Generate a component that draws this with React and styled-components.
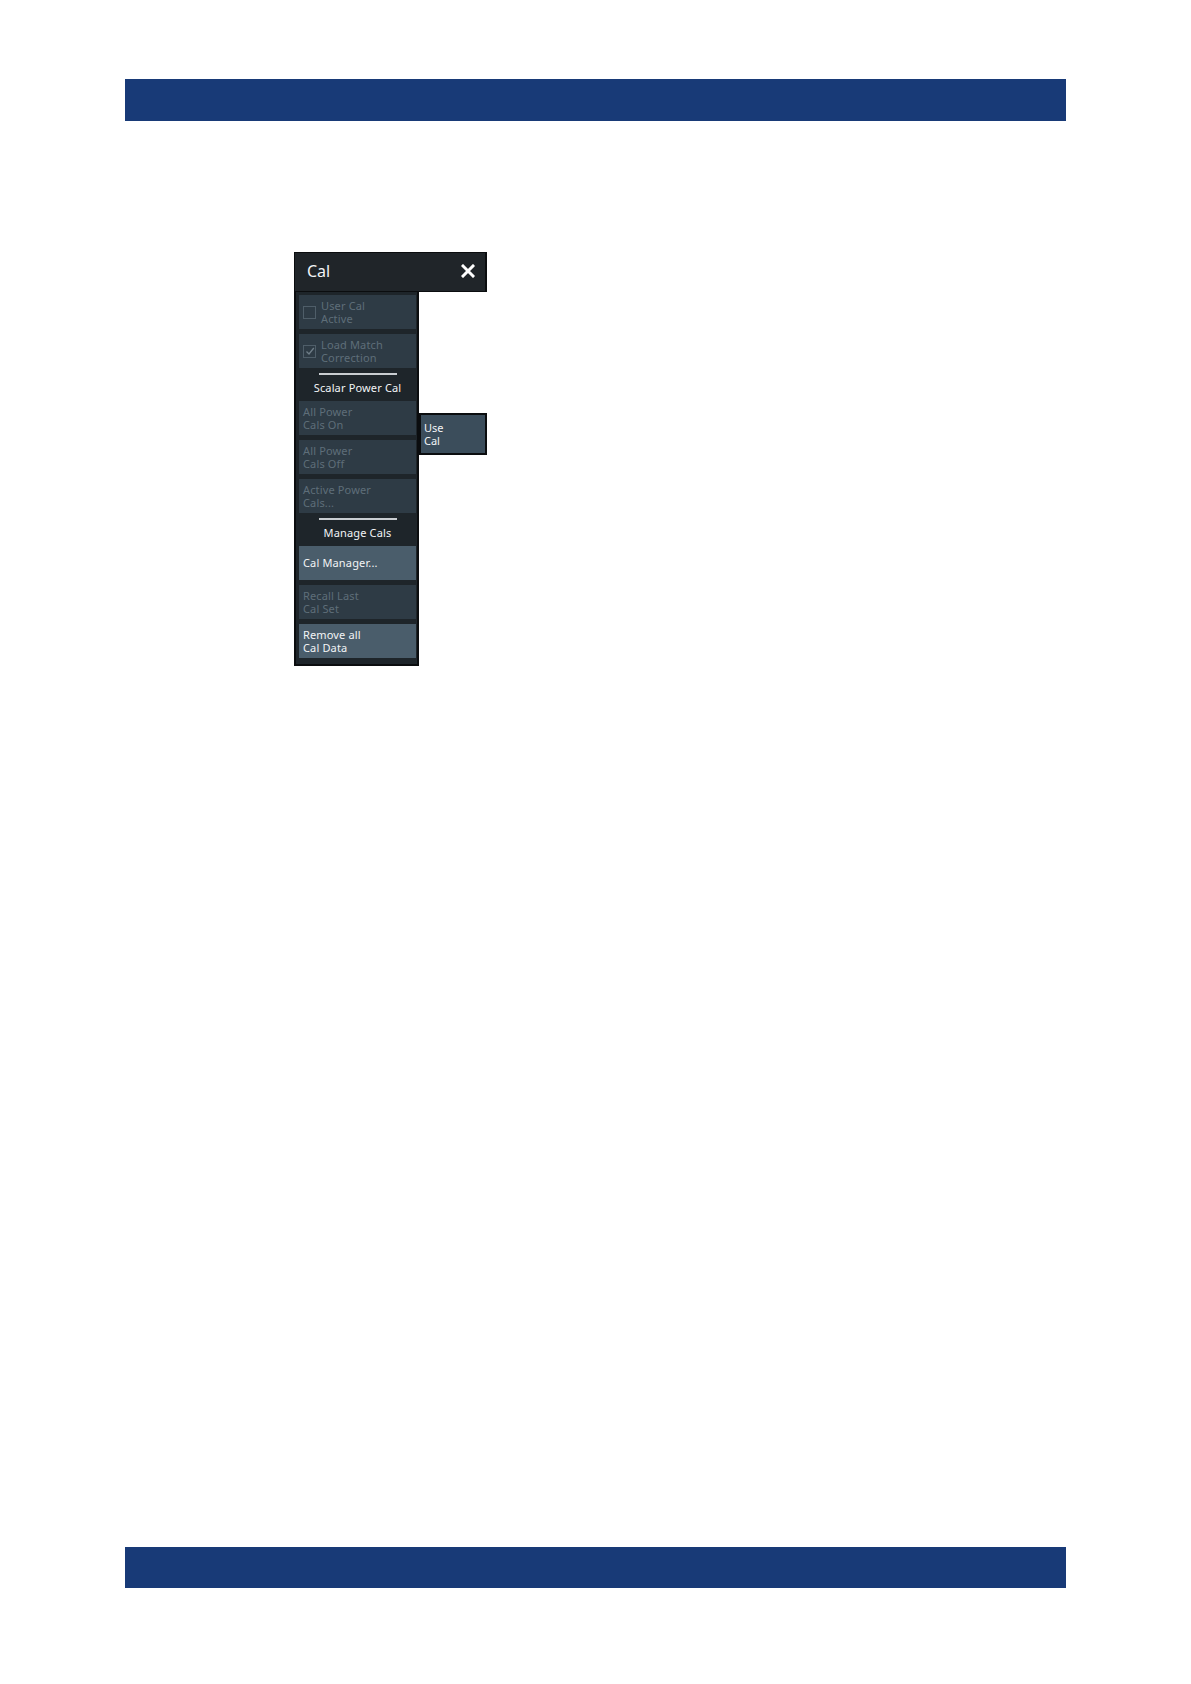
import React from 'react';
import styled, { createGlobalStyle } from 'styled-components';

const COLORS = {
  brand: '#183a77',
  titleBg: '#202529',
  panelBg: '#1e252a',
  edge: '#0b0d0f',
  buttonOff: '#2e3b45',
  buttonOn: '#4a5d6b',
  flyout: '#3b4d5b',
  textOff: '#5e6e79',
  textOn: '#f2f4f6',
  rule: '#c9cdd1',
};

const GlobalStyle = createGlobalStyle`
  html, body {
    margin: 0;
    padding: 0;
    background: #ffffff;
  }
  body {
    font-family: "Noto Sans", "Open Sans", sans-serif;
  }
`;

const menuItems = [
  { type: 'check', label: ['User Cal', 'Active'], checked: false },
  { type: 'check', label: ['Load Match', 'Correction'], checked: true },
  { type: 'section', label: 'Scalar Power Cal' },
  { type: 'button', label: ['All Power', 'Cals On'], flyout: true },
  { type: 'button', label: ['All Power', 'Cals Off'] },
  { type: 'button', label: ['Active Power', 'Cals...'] },
  { type: 'section', label: 'Manage Cals' },
  { type: 'button', label: ['Cal Manager...'], active: true },
  { type: 'button', label: ['Recall Last', 'Cal Set'] },
  { type: 'button', label: ['Remove all', 'Cal Data'], active: true },
];

const CloseIcon = () => (
  <svg width="14" height="14" viewBox="0 0 14 14" aria-hidden="true">
    <path d="M2 2 L12 12 M12 2 L2 12" stroke="#ffffff" strokeWidth="3" strokeLinecap="square" />
  </svg>
);

const CheckIcon = () => (
  <svg width="10" height="10" viewBox="0 0 10 10" aria-hidden="true">
    <path d="M1.5 5.5 L4 8 L8.8 2" stroke="#6f7e88" strokeWidth="1.3" fill="none" />
  </svg>
);

const App = () => {
  return (
    <Page>
      <GlobalStyle />
      <HeaderBar />
      <Content>
        <Menu>
          <TitleBar>
            <Title>Cal</Title>
            <CloseIcon />
          </TitleBar>
          <Body>
            {menuItems.map((item, i) => {
              if (item.type === 'section') {
                return (
                  <Section key={i}>
                    <Rule />
                    <SectionLabel>{item.label}</SectionLabel>
                  </Section>
                );
              }
              return (
                <Button key={i} active={item.active}>
                  {item.type === 'check' && (
                    <CheckBox>{item.checked && <CheckIcon />}</CheckBox>
                  )}
                  <Label>
                    {item.label.map((l) => (
                      <span key={l}>{l}</span>
                    ))}
                  </Label>
                  {item.flyout && (
                    <Flyout>
                      <span>Use</span>
                      <span>Cal</span>
                    </Flyout>
                  )}
                </Button>
              );
            })}
          </Body>
        </Menu>
      </Content>
      <FooterBar />
    </Page>
  );
};

const Page = styled.div`
  box-sizing: border-box;
  height: 1684px;
  padding: 79px 0 96px 125px;
  display: flex;
  flex-direction: column;
`;

const HeaderBar = styled.div`
  width: 941px;
  height: 42px;
  background: ${COLORS.brand};
`;

const FooterBar = styled(HeaderBar)`
  height: 41px;
  margin-top: auto;
`;

const Content = styled.div`
  padding: 131px 0 0 169px;
`;

const Menu = styled.div`
  display: flex;
  flex-direction: column;
  width: 193px;
`;

const TitleBar = styled.div`
  box-sizing: border-box;
  height: 40px;
  background: ${COLORS.titleBg};
  border: 1px solid ${COLORS.edge};
  border-right-width: 2px;
  display: flex;
  align-items: center;
  justify-content: space-between;
  padding: 0 10px 3px 12px;
`;

const Title = styled.span`
  color: ${COLORS.textOn};
  font-size: 16px;
  line-height: 20px;
`;

const Body = styled.div`
  box-sizing: border-box;
  width: 125px;
  background: ${COLORS.panelBg};
  border: 2px solid ${COLORS.edge};
  border-top: none;
  padding: 3px 1px 6px 3px;
  display: flex;
  flex-direction: column;
  gap: 5px;
`;

const Button = styled.div`
  position: relative;
  box-sizing: border-box;
  height: 34px;
  width: 117px;
  background: ${(p) => (p.active ? COLORS.buttonOn : COLORS.buttonOff)};
  color: ${(p) => (p.active ? COLORS.textOn : COLORS.textOff)};
  display: flex;
  align-items: center;
  gap: 5px;
  padding: 0 4px;
`;

const Label = styled.div`
  display: flex;
  flex-direction: column;
  font-size: 11px;
  letter-spacing: 0.15px;
  line-height: 13.5px;
  white-space: nowrap;
`;

const CheckBox = styled.div`
  box-sizing: border-box;
  width: 13px;
  height: 13px;
  border: 1px solid #4f5e69;
  display: flex;
  align-items: center;
  justify-content: center;
  flex-shrink: 0;
`;

const Section = styled.div`
  display: flex;
  flex-direction: column;
  align-items: center;
`;

const Rule = styled.div`
  width: 78px;
  height: 2px;
  background: ${COLORS.rule};
`;

const SectionLabel = styled.div`
  color: ${COLORS.textOn};
  font-size: 11px;
  letter-spacing: 0.15px;
  line-height: 16px;
  padding-top: 5px;
  white-space: nowrap;
`;

const Flyout = styled.div`
  position: absolute;
  left: 120px;
  top: 12px;
  box-sizing: border-box;
  width: 68px;
  height: 42px;
  background: ${COLORS.flyout};
  border: 2px solid ${COLORS.edge};
  color: ${COLORS.textOn};
  display: flex;
  flex-direction: column;
  justify-content: center;
  padding-left: 3px;
  font-size: 11px;
  line-height: 13.5px;
`;

export default App;
